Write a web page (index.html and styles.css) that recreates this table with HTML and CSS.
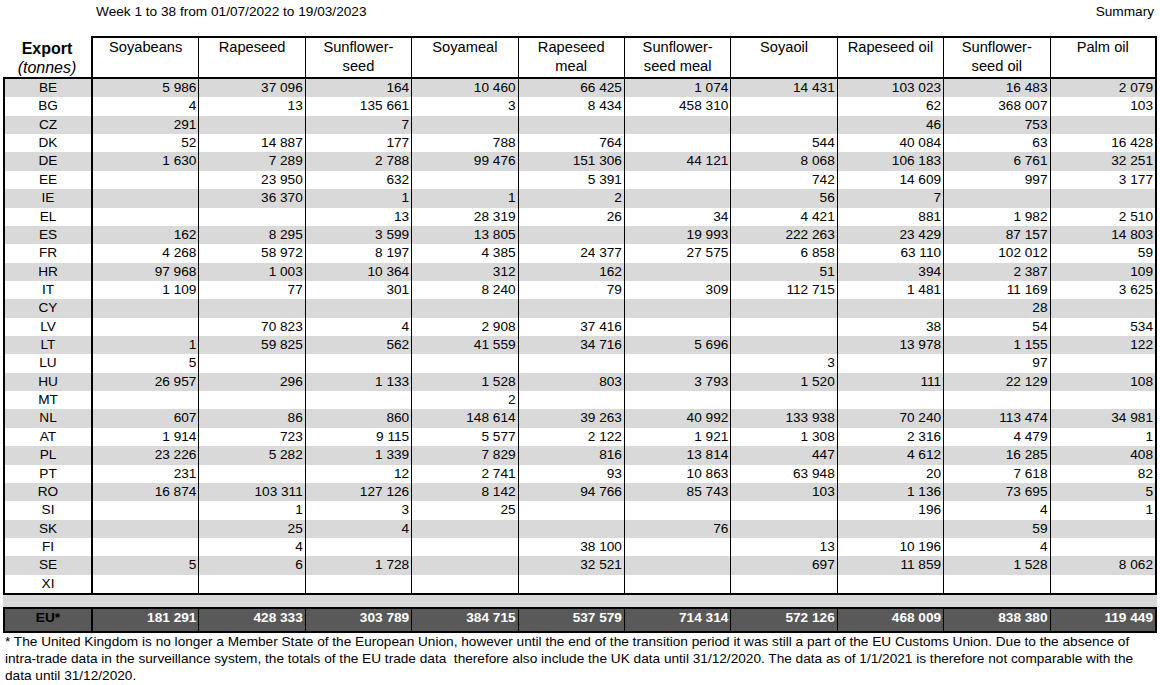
FILE: index.html
```html
<!DOCTYPE html>
<html lang="en">
<head>
<meta charset="utf-8">
<title>Export (tonnes) – Week 1 to 38</title>
<link rel="stylesheet" href="styles.css">
</head>
<body>
<div class="topbar"><span>Week 1 to 38 from 01/07/2022 to 19/03/2023</span><span>Summary</span></div>
<div class="sheet">
  <div class="head">
    <div class="label"><b>Export</b><i>(tonnes)</i></div>
    <div class="hcols">
      <div class="hc">Soyabeans</div>
      <div class="hc">Rapeseed</div>
      <div class="hc">Sunflower-<br>seed</div>
      <div class="hc">Soyameal</div>
      <div class="hc">Rapeseed<br>meal</div>
      <div class="hc">Sunflower-<br>seed meal</div>
      <div class="hc">Soyaoil</div>
      <div class="hc">Rapeseed oil</div>
      <div class="hc">Sunflower-<br>seed oil</div>
      <div class="hc">Palm oil</div>
    </div>
  </div>
  <div class="body">
    <div class="row"><span class="cc">BE</span><span>5 986</span><span>37 096</span><span>164</span><span>10 460</span><span>66 425</span><span>1 074</span><span>14 431</span><span>103 023</span><span>16 483</span><span>2 079</span></div>
    <div class="row"><span class="cc">BG</span><span>4</span><span>13</span><span>135 661</span><span>3</span><span>8 434</span><span>458 310</span><span></span><span>62</span><span>368 007</span><span>103</span></div>
    <div class="row"><span class="cc">CZ</span><span>291</span><span></span><span>7</span><span></span><span></span><span></span><span></span><span>46</span><span>753</span><span></span></div>
    <div class="row"><span class="cc">DK</span><span>52</span><span>14 887</span><span>177</span><span>788</span><span>764</span><span></span><span>544</span><span>40 084</span><span>63</span><span>16 428</span></div>
    <div class="row"><span class="cc">DE</span><span>1 630</span><span>7 289</span><span>2 788</span><span>99 476</span><span>151 306</span><span>44 121</span><span>8 068</span><span>106 183</span><span>6 761</span><span>32 251</span></div>
    <div class="row"><span class="cc">EE</span><span></span><span>23 950</span><span>632</span><span></span><span>5 391</span><span></span><span>742</span><span>14 609</span><span>997</span><span>3 177</span></div>
    <div class="row"><span class="cc">IE</span><span></span><span>36 370</span><span>1</span><span>1</span><span>2</span><span></span><span>56</span><span>7</span><span></span><span></span></div>
    <div class="row"><span class="cc">EL</span><span></span><span></span><span>13</span><span>28 319</span><span>26</span><span>34</span><span>4 421</span><span>881</span><span>1 982</span><span>2 510</span></div>
    <div class="row"><span class="cc">ES</span><span>162</span><span>8 295</span><span>3 599</span><span>13 805</span><span></span><span>19 993</span><span>222 263</span><span>23 429</span><span>87 157</span><span>14 803</span></div>
    <div class="row"><span class="cc">FR</span><span>4 268</span><span>58 972</span><span>8 197</span><span>4 385</span><span>24 377</span><span>27 575</span><span>6 858</span><span>63 110</span><span>102 012</span><span>59</span></div>
    <div class="row"><span class="cc">HR</span><span>97 968</span><span>1 003</span><span>10 364</span><span>312</span><span>162</span><span></span><span>51</span><span>394</span><span>2 387</span><span>109</span></div>
    <div class="row"><span class="cc">IT</span><span>1 109</span><span>77</span><span>301</span><span>8 240</span><span>79</span><span>309</span><span>112 715</span><span>1 481</span><span>11 169</span><span>3 625</span></div>
    <div class="row"><span class="cc">CY</span><span></span><span></span><span></span><span></span><span></span><span></span><span></span><span></span><span>28</span><span></span></div>
    <div class="row"><span class="cc">LV</span><span></span><span>70 823</span><span>4</span><span>2 908</span><span>37 416</span><span></span><span></span><span>38</span><span>54</span><span>534</span></div>
    <div class="row"><span class="cc">LT</span><span>1</span><span>59 825</span><span>562</span><span>41 559</span><span>34 716</span><span>5 696</span><span></span><span>13 978</span><span>1 155</span><span>122</span></div>
    <div class="row"><span class="cc">LU</span><span>5</span><span></span><span></span><span></span><span></span><span></span><span>3</span><span></span><span>97</span><span></span></div>
    <div class="row"><span class="cc">HU</span><span>26 957</span><span>296</span><span>1 133</span><span>1 528</span><span>803</span><span>3 793</span><span>1 520</span><span>111</span><span>22 129</span><span>108</span></div>
    <div class="row"><span class="cc">MT</span><span></span><span></span><span></span><span>2</span><span></span><span></span><span></span><span></span><span></span><span></span></div>
    <div class="row"><span class="cc">NL</span><span>607</span><span>86</span><span>860</span><span>148 614</span><span>39 263</span><span>40 992</span><span>133 938</span><span>70 240</span><span>113 474</span><span>34 981</span></div>
    <div class="row"><span class="cc">AT</span><span>1 914</span><span>723</span><span>9 115</span><span>5 577</span><span>2 122</span><span>1 921</span><span>1 308</span><span>2 316</span><span>4 479</span><span>1</span></div>
    <div class="row"><span class="cc">PL</span><span>23 226</span><span>5 282</span><span>1 339</span><span>7 829</span><span>816</span><span>13 814</span><span>447</span><span>4 612</span><span>16 285</span><span>408</span></div>
    <div class="row"><span class="cc">PT</span><span>231</span><span></span><span>12</span><span>2 741</span><span>93</span><span>10 863</span><span>63 948</span><span>20</span><span>7 618</span><span>82</span></div>
    <div class="row"><span class="cc">RO</span><span>16 874</span><span>103 311</span><span>127 126</span><span>8 142</span><span>94 766</span><span>85 743</span><span>103</span><span>1 136</span><span>73 695</span><span>5</span></div>
    <div class="row"><span class="cc">SI</span><span></span><span>1</span><span>3</span><span>25</span><span></span><span></span><span></span><span>196</span><span>4</span><span>1</span></div>
    <div class="row"><span class="cc">SK</span><span></span><span>25</span><span>4</span><span></span><span></span><span>76</span><span></span><span></span><span>59</span><span></span></div>
    <div class="row"><span class="cc">FI</span><span></span><span>4</span><span></span><span></span><span>38 100</span><span></span><span>13</span><span>10 196</span><span>4</span><span></span></div>
    <div class="row"><span class="cc">SE</span><span>5</span><span>6</span><span>1 728</span><span></span><span>32 521</span><span></span><span>697</span><span>11 859</span><span>1 528</span><span>8 062</span></div>
    <div class="row"><span class="cc">XI</span><span></span><span></span><span></span><span></span><span></span><span></span><span></span><span></span><span></span><span></span></div>
  </div>
  <div class="gap"></div>
  <div class="total"><span class="cc">EU*</span><span>181 291</span><span>428 333</span><span>303 789</span><span>384 715</span><span>537 579</span><span>714 314</span><span>572 126</span><span>468 009</span><span>838 380</span><span>119 449</span></div>
</div>
<p class="note">* The United Kingdom is no longer a Member State of the European Union, however until the end of the transition period it was still a part of the EU Customs Union. Due to the absence of<br>intra-trade data in the surveillance system, the totals of the EU trade data&nbsp; therefore also include the UK data until 31/12/2020. The data as of 1/1/2021 is therefore not comparable with the<br>data until 31/12/2020.</p>
</body>
</html>
```

FILE: styles.css
```css
html, body {
  margin: 0;
  padding: 0;
  background: #fff;
}

body {
  font-family: "Liberation Sans", Arial, sans-serif;
  color: #000;
  font-size: 13.65px;
}

.topbar {
  display: flex;
  justify-content: space-between;
  height: 36px;
  padding: 0 6px 0 96px;
  line-height: 24px;
}

.sheet {
  width: 1154px;
  margin-left: 3px;
}

.head {
  display: grid;
  grid-template-columns: 88px 1fr;
  height: 41px;
}

.label {
  display: flex;
  flex-direction: column;
  align-items: center;
  padding-top: 3px;
  font-size: 16px;
  line-height: 19px;
}

.label i {
  font-style: italic;
}

.hcols {
  display: grid;
  grid-template-columns: repeat(9, 106.4px) 1fr;
  border: 2px solid #000;
  border-bottom: none;
  font-size: 14.67px;
  line-height: 19px;
}

.hc {
  text-align: center;
  border-right: 1px solid #000;
}

.hc:last-child {
  border-right: none;
}

.body {
  border: 2px solid #000;
}

.row,
.total {
  display: grid;
  grid-template-columns: 88px repeat(9, 106.4px) 1fr;
  height: 18.36px;
  line-height: 18px;
}

.row:nth-child(odd) {
  background: #d9d9d9;
}

.row > span,
.total > span {
  text-align: right;
  padding-right: 2px;
  border-right: 1px solid #000;
  white-space: nowrap;
}

.row > span:last-child,
.total > span:last-child {
  border-right: none;
}

.row > .cc,
.total > .cc {
  text-align: center;
  padding-right: 0;
  border-right: 2px solid #000;
}

.gap {
  height: 12px;
  background: #d9d9d9;
}

.total {
  height: 22px;
  border: 2px solid #000;
  background: #595959;
  color: #fff;
  font-weight: bold;
}

.total > .cc {
  color: #000;
}

.note {
  margin: 0;
  padding: 0 0 0 5px;
  line-height: 17px;
  white-space: nowrap;
}
```
